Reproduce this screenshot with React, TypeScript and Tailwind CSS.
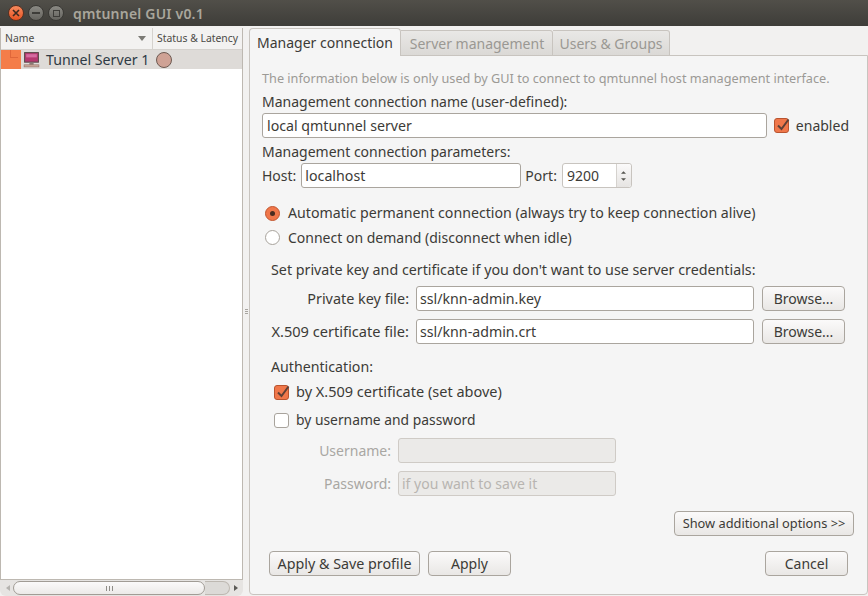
const font = { fontFamily: '"Noto Sans", sans-serif' };

function Check({ on }: { on?: boolean }) {
  if (!on) return <span className="block w-[15px] h-[15px] rounded-[3px] border border-[#a8a39c] bg-white shrink-0" />;
  return (
    <span className="relative block w-[15px] h-[15px] rounded-[3px] border border-[#b9542f] bg-[#f0774a] shrink-0">
      <svg viewBox="0 0 16 16" className="absolute left-[0px] top-[-2px] w-[16px] h-[16px]">
        <path d="M3 8.5 L6.5 12 L13.5 2.5" fill="none" stroke="#5d4037" strokeWidth="2" />
      </svg>
    </span>
  );
}

function Radio({ on }: { on?: boolean }) {
  return on ? (
    <span className="flex items-center justify-center w-[15px] h-[15px] rounded-full border border-[#c2562f] bg-[#f0774a] shrink-0">
      <span className="block w-[5px] h-[5px] rounded-full bg-[#4a2c20]" />
    </span>
  ) : (
    <span className="block w-[15px] h-[15px] rounded-full border border-[#a8a39c] bg-white shrink-0" />
  );
}

function Field({ value, className, disabled }: { value?: string; className: string; disabled?: boolean }) {
  return (
    <div className={`h-[25px] rounded-[3px] border flex items-center px-[3px] pt-px leading-none ${disabled ? "border-[#cfcbc6] bg-[#ebeae8] text-[#b8b5b1] text-[14px]" : "border-[#aaa59e] bg-white text-[#3c3b37] text-[14.2px]"} ${className}`}>
      {value}
    </div>
  );
}

function Btn({ children, className, size = "text-[14px]" }: { children: React.ReactNode; className: string; size?: string }) {
  return (
    <div className={`h-[25px] rounded-[4px] border border-[#aaa59e] bg-gradient-to-b from-[#fbfafa] to-[#e9e7e5] flex items-center justify-center text-[#3c3b37] ${size} ${className}`}>
      {children}
    </div>
  );
}

export default function App() {
  return (
    <div className="w-[868px] h-[596px] flex flex-col overflow-hidden bg-[#f2f1f0] text-[#3c3b37]" style={font}>
      {/* Title bar */}
      <div className="h-[26px] shrink-0 flex items-center bg-gradient-to-b from-[#514f49] to-[#3e3d39] pl-[8px]">
        <span className="flex items-center justify-center w-[16px] h-[16px] rounded-full bg-gradient-to-b from-[#f78a5d] to-[#e5521f] border border-[#5a3020]">
          <svg viewBox="0 0 8 8" className="w-[8px] h-[8px]"><path d="M1 1 L7 7 M7 1 L1 7" stroke="#3c2a20" strokeWidth="1.6" /></svg>
        </span>
        <span className="ml-[4px] flex items-center justify-center w-[16px] h-[16px] rounded-full bg-gradient-to-b from-[#8b8a84] to-[#65645f] border border-[#3a3935]">
          <span className="block w-[8px] h-[2px] bg-[#3e3d39]" />
        </span>
        <span className="ml-[4px] flex items-center justify-center w-[16px] h-[16px] rounded-full bg-gradient-to-b from-[#8b8a84] to-[#65645f] border border-[#3a3935]">
          <span className="block w-[7px] h-[7px] border border-[#3e3d39]" />
        </span>
        <span className="ml-[9px] text-[14px] font-semibold text-[#a9a69c] tracking-[0.2px]">qmtunnel GUI v0.1</span>
      </div>

      <div className="flex-1 flex min-h-0">
        {/* Left panel */}
        <div className="w-[243px] shrink-0 flex flex-col pt-[2px]">
          <div className="flex-1 flex flex-col bg-white border border-[#bdb8b1] border-t-0 min-h-0">
            <div className="h-[22px] shrink-0 flex bg-[#f3f2f1] border-b border-[#d5d2ce] text-[10.4px] text-[#4c4b47] items-center">
              <div className="w-[152px] h-full flex items-center justify-between pl-[4px] pr-[6px] border-r border-[#d5d2ce]">
                <span>Name</span>
                <svg viewBox="0 0 8 5" className="w-[8px] h-[5px]"><path d="M0 0 H8 L4 5 Z" fill="#7b7a75" /></svg>
              </div>
              <div className="pl-[4px] whitespace-nowrap">Status &amp; Latency</div>
            </div>
            <div className="h-[19px] shrink-0 flex items-center bg-[#dedbd8]">
              <div className="relative w-[20px] h-full bg-[#f47d49]">
                <span className="absolute left-[9px] top-0 w-[8px] h-[8px] border-l border-b border-[#e0673a]" />
              </div>
              <svg viewBox="0 0 16 16" className="ml-[2px] w-[17px] h-[17px]">
                <rect x="1.5" y="1.5" width="13" height="9" fill="#b5386f" stroke="#5a4a4a" />
                <rect x="3" y="3" width="10" height="3" fill="#d66ba0" />
                <rect x="6" y="11" width="4" height="2" fill="#8a7a74" />
                <rect x="1" y="13" width="14" height="2" fill="#c9a79a" stroke="#8a6a60" strokeWidth="0.5" />
              </svg>
              <span className="ml-[6px] text-[14.2px] text-[#2f3a45] whitespace-nowrap">Tunnel Server 1</span>
              <span className="ml-[7px] w-[16px] h-[16px] rounded-full border border-[#6e5a52] bg-[#cfa295]" />
            </div>
            <div className="flex-1" />
          </div>
          {/* Scrollbar */}
          <div className="h-[16px] shrink-0 flex items-center bg-[#e6e4e2] rounded-b-[6px] relative">
            <svg viewBox="0 0 4 6" className="ml-[6px] w-[4px] h-[6px]"><path d="M4 0 V6 L0 3 Z" fill="#b5b3af" /></svg>
            <div className="ml-[3px] w-[192px] h-[14px] rounded-full border border-[#a19c95] bg-gradient-to-b from-[#fbfafa] to-[#eceae8] flex items-center justify-center gap-[2px] relative">
              <span className="w-px h-[5px] bg-[#8f8d88]" />
              <span className="w-px h-[5px] bg-[#8f8d88]" />
              <span className="w-px h-[5px] bg-[#8f8d88]" />
            </div>
            <div className="w-[25px] h-[14px] rounded-r-full border border-l-0 border-[#bdb8b1] bg-[#dcdad7]" />
            <svg viewBox="0 0 4 6" className="ml-[4px] w-[4px] h-[6px]"><path d="M0 0 V6 L4 3 Z" fill="#5c5b57" /></svg>
          </div>
        </div>

        {/* Splitter */}
        <div className="w-[6px] shrink-0 flex flex-col items-center justify-center gap-[1px]">
          <span className="w-[3px] h-px bg-[#a8a5a0]" />
          <span className="w-[3px] h-px bg-[#a8a5a0]" />
          <span className="w-[3px] h-px bg-[#a8a5a0]" />
        </div>

        {/* Right panel */}
        <div className="flex-1 flex flex-col pt-[2px] min-w-0">
          <div className="h-[28px] shrink-0 flex items-end relative z-10 -mb-px">
            <div className="h-[28px] w-[152px] bg-[#f5f5f5] border border-b-0 border-[#c8c4bf] rounded-t-[4px] flex items-center justify-center text-[14px] text-[#3c3b37]">Manager connection</div>
            <div className="h-[26px] w-[152px] pl-px bg-gradient-to-b from-[#e9e8e6] to-[#dbd9d6] border border-l-0 border-[#c8c4bf] rounded-tr-[3px] flex items-center justify-center text-[14px] text-[#9a9893]">Server management</div>
            <div className="h-[26px] w-[117px] bg-gradient-to-b from-[#e9e8e6] to-[#dbd9d6] border border-l-0 border-[#c8c4bf] rounded-tr-[3px] flex items-center justify-center text-[14px] text-[#9a9893]">Users &amp; Groups</div>
          </div>
          <div className="flex-1 bg-[#f5f5f5] border border-[#c8c4bf] rounded-b-[4px] flex flex-col pl-[12px] pr-[18px] text-[14px] min-h-0 whitespace-nowrap">
            <div className="h-[20px] mt-[13px] flex items-center text-[12.7px] text-[#9c9a96]">The information below is only used by GUI to connect to qmtunnel host management interface.</div>
            <div className="h-[20px] mt-[2px] flex items-center">Management connection name (user-defined):</div>
            <div className="h-[25px] mt-[2px] flex items-center">
              <Field value="local qmtunnel server" className="w-[505px] pl-[4px]" />
              <span className="ml-[7px]"><Check on /></span>
              <span className="ml-[7px]">enabled</span>
            </div>
            <div className="h-[20px] mt-[3px] flex items-center">Management connection parameters:</div>
            <div className="h-[25px] mt-[2px] flex items-center">
              <span>Host:</span>
              <Field value="localhost" className="ml-[5px] w-[220px]" />
              <span className="ml-[4px]">Port:</span>
              <div className="ml-[5px] w-[70px] h-[25px] rounded-[3px] border border-[#c8c4bf] bg-white flex">
                <span className="flex-1 flex items-center pl-[4px] pt-px text-[14px] leading-none">9200</span>
                <span className="w-[15px] border-l border-[#d5d2ce] flex flex-col items-center justify-center gap-[4px] bg-gradient-to-b from-[#fbfafa] to-[#e6e4e2] rounded-r-[3px]">
                  <svg viewBox="0 0 6 3" className="w-[5px] h-[3px]"><path d="M3 0 L6 3 H0 Z" fill="#55544f" /></svg>
                  <svg viewBox="0 0 6 3" className="w-[5px] h-[3px]"><path d="M0 0 H6 L3 3 Z" fill="#55544f" /></svg>
                </span>
              </div>
            </div>
            <div className="h-[20px] mt-[15px] flex items-center pl-[3px] gap-[8px] text-[14.18px]"><Radio on /><span>Automatic permanent connection (always try to keep connection alive)</span></div>
            <div className="h-[20px] mt-[4px] flex items-center pl-[3px] gap-[8px]"><Radio /><span>Connect on demand (disconnect when idle)</span></div>
            <div className="h-[20px] mt-[13px] flex items-center pl-[9px] text-[14.27px]">Set private key and certificate if you don't want to use server credentials:</div>
            <div className="h-[25px] mt-[6px] flex items-center">
              <span className="w-[147px] text-right text-[14.4px]">Private key file:</span>
              <Field value="ssl/knn-admin.key" className="ml-[7px] w-[338px]" />
              <Btn className="ml-[8px] w-[83px]">Browse...</Btn>
            </div>
            <div className="h-[25px] mt-[8px] flex items-center">
              <span className="w-[147px] text-right text-[14.6px]">X.509 certificate file:</span>
              <Field value="ssl/knn-admin.crt" className="ml-[7px] w-[338px]" />
              <Btn className="ml-[8px] w-[83px]">Browse...</Btn>
            </div>
            <div className="h-[20px] mt-[13px] flex items-center pl-[9px] text-[14.2px]">Authentication:</div>
            <div className="h-[20px] mt-[5px] flex items-center pl-[12px] gap-[7px]"><Check on /><span className="text-[14.5px]">by X.509 certificate (set above)</span></div>
            <div className="h-[20px] mt-[8px] flex items-center pl-[12px] gap-[7px]"><Check /><span className="text-[13.85px]">by username and password</span></div>
            <div className="h-[25px] mt-[8px] flex items-center text-[#a9a7a3]">
              <span className="w-[129px] text-right">Username:</span>
              <Field className="ml-[7px] w-[218px]" disabled />
            </div>
            <div className="h-[25px] mt-[8px] flex items-center text-[#a9a7a3]">
              <span className="w-[129px] text-right">Password:</span>
              <Field value="if you want to save it" className="ml-[7px] w-[218px]" disabled />
            </div>
            <div className="h-[25px] mt-[15px] flex justify-end">
              <Btn className="w-[180px] -mr-[5px]" size="text-[12.8px]">Show additional options &gt;&gt;</Btn>
            </div>
            <div className="h-[25px] mt-[15px] flex items-center pl-[7px]">
              <Btn className="w-[151px]" size="text-[14.3px]">Apply &amp; Save profile</Btn>
              <Btn className="ml-[8px] w-[83px]">Apply</Btn>
              <Btn className="ml-auto mr-[1px] w-[83px]">Cancel</Btn>
            </div>
          </div>
          <div className="h-px shrink-0" />
        </div>
      </div>
    </div>
  );
}
